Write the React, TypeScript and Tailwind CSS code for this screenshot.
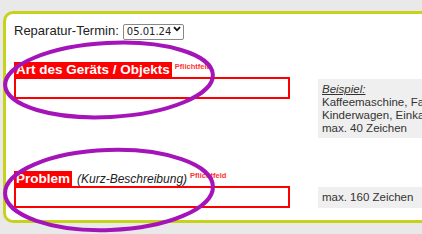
import React from 'react'

const Pflicht = () => (
  <span className="text-[7.5px] leading-[8px] text-[#ff3030] ml-[3px] mt-[1px] font-bold">Pflichtfeld</span>
)

export default function App() {
  return (
    <div className="w-[422px] h-[234px] bg-[#e9e9e9] overflow-hidden relative font-['Liberation_Sans',Arial,sans-serif] text-[#222]">
      <div className="mt-[11px] ml-[3px] w-[460px] h-[212px] bg-white border-[3px] border-[#c7d21c] rounded-[10px] pl-[8px] pt-[9px]">
        {/* Termin */}
        <div className="flex items-center h-[15px] text-[13px]">
          <span>Reparatur-Termin:</span>
          <div className="relative ml-[4px]">
            <select className="appearance-none h-[16px] w-[61px] border border-[#888] rounded-[2px] text-[10px] font-['DejaVu_Sans',sans-serif] pl-[3px] pr-[12px] leading-none bg-white">
              <option>05.01.24</option>
            </select>
            <svg className="absolute right-[3px] top-[5px] pointer-events-none" width="8" height="6" viewBox="0 0 8 6">
              <path d="M1 1.2 L4 4.3 L7 1.2" fill="none" stroke="#111" strokeWidth="1.8" />
            </svg>
          </div>
        </div>

        {/* Art des Geräts */}
        <div className="mt-[24px] flex items-start">
          <div className="w-[276px]">
            <div className="flex items-start h-[15px]">
              <span className="bg-[#ff0000] text-white font-bold text-[13.5px] leading-[15px] px-[2px]">Art des Geräts / Objekts</span>
              <Pflicht />
            </div>
            <div className="h-[22px] border-2 border-[#ff0000] bg-white" />
          </div>
          <div className="ml-[28px] mt-[17px] w-[130px] bg-[#efefef] pl-[4px] pt-[4px] pb-[3px] text-[11.5px] leading-[13px] text-[#333] whitespace-nowrap overflow-hidden">
            <div className="italic underline">Beispiel:</div>
            <div>Kaffeemaschine, Fahrrad,</div>
            <div>Kinderwagen, Einkaufstrolley,</div>
            <div>max. 40 Zeichen</div>
          </div>
        </div>

        {/* Problem */}
        <div className="mt-[33px] flex items-start">
          <div className="w-[276px]">
            <div className="flex items-start h-[15px]">
              <span className="bg-[#ff0000] text-white font-bold text-[13.5px] leading-[15px] px-[2px]">Problem</span>
              <span className="ml-[5px] italic text-[12px] leading-[17px] text-[#222]">(Kurz-Beschreibung)</span>
              <Pflicht />
            </div>
            <div className="h-[22px] border-2 border-[#ff0000] bg-white" />
          </div>
          <div className="ml-[28px] mt-[16px] w-[130px] h-[21px] bg-[#efefef] pl-[4px] flex items-center text-[11.5px] text-[#333]">
            max. 160 Zeichen
          </div>
        </div>
      </div>

      {/* Annotation ellipses */}
      <svg className="absolute left-0 top-0 pointer-events-none" width="422" height="234">
        <ellipse cx="109" cy="80" rx="104" ry="37" transform="rotate(-3 109 80)" fill="none" stroke="#a414b8" strokeWidth="4" />
        <ellipse cx="109" cy="190" rx="104" ry="40" transform="rotate(-2 109 190)" fill="none" stroke="#a414b8" strokeWidth="4" />
      </svg>
    </div>
  )
}
